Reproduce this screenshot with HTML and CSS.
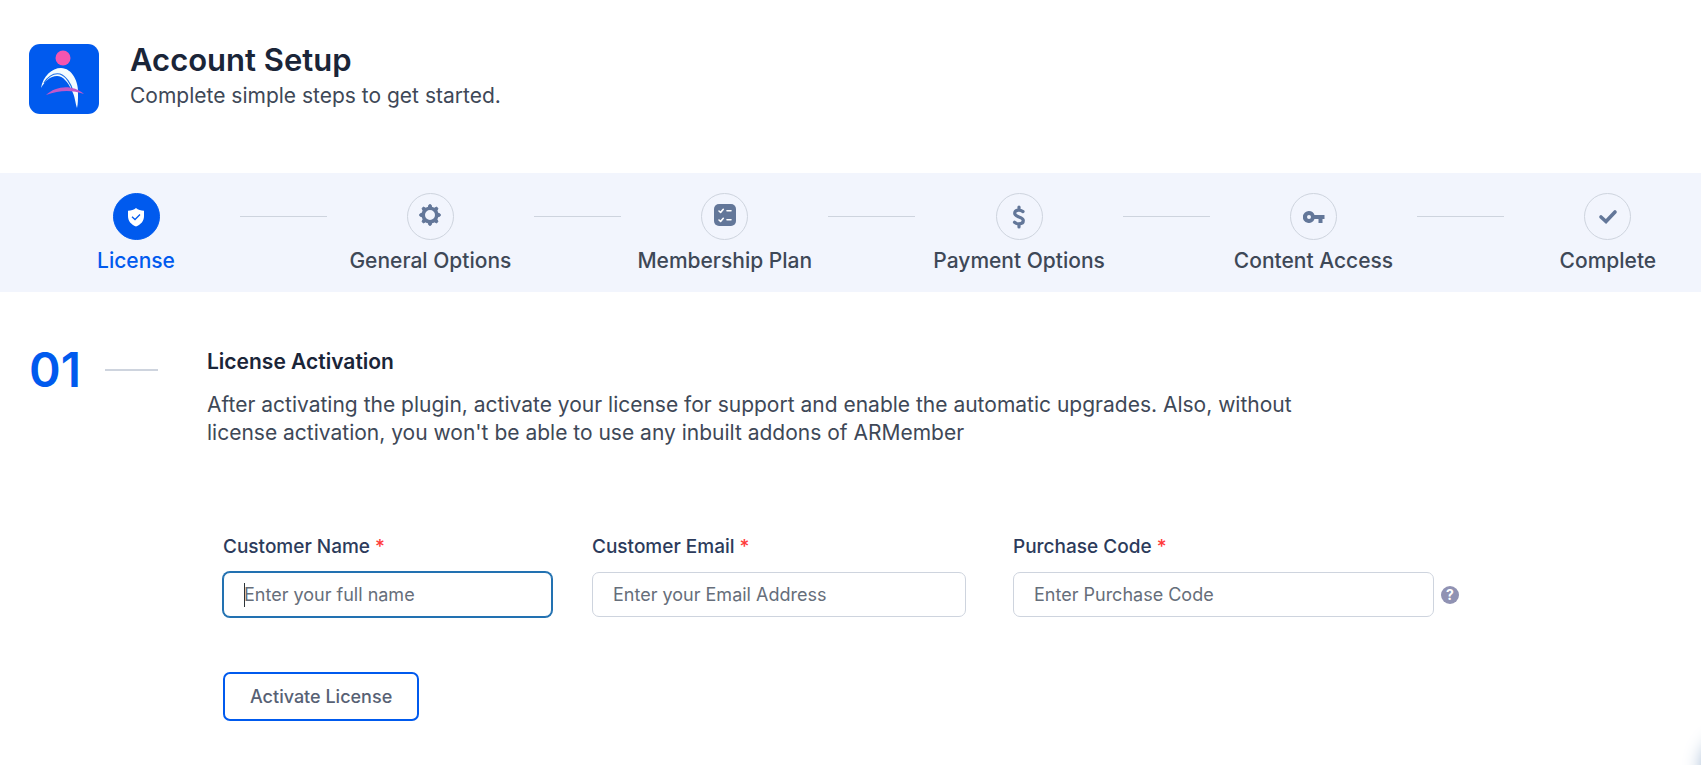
FILE: index.html
```html
<!DOCTYPE html>
<html lang="en">
<head>
    <meta charset="UTF-8">
    <meta name="viewport" content="width=device-width, initial-scale=1.0">
    <title>Account Setup</title>
    <link rel="stylesheet" href="styles.css">
</head>
<body>

<header class="header">
    <svg class="logo" viewBox="0 0 70 70" aria-hidden="true">
        <rect width="70" height="70" rx="11" fill="#005aee"/>
        <circle cx="34" cy="14" r="7.5" fill="#f455b0"/>
        <path d="M12 44C14 32 23 24 32 24C43 24 50 38 49 50C49 55 49 60 48 64C46 58 46 52 43 47C39 38 34 32 28 32C21 32 16 37 12 44Z" fill="#f4fcff"/>
        <path d="M15 39C20 31 26 29 31 30C37 32 42 40 44 47" fill="none" stroke="#1f6fe8" stroke-width="1.200"/>
        <path d="M17 51C27 42 43 40 55 50C43 46 31 46 17 51Z" fill="#c158c8"/>
    </svg>
    <div>
        <h1>Account Setup</h1>
        <p>Complete simple steps to get started.</p>
    </div>
</header>

<ol class="steps">
    <li class="step active">
        <span class="step-icon">
            <svg width="18" height="20" viewBox="0 0 18 20" aria-hidden="true">
                <path d="M9 1C11 2.800 14 3.600 17 3.700V9C17 14 14 17.500 9 19.500C4 17.500 1 14 1 9V3.700C4 3.600 7 2.800 9 1Z" fill="#fff"/>
                <path d="M5 9.700L8 12.500L13 7.500" fill="none" stroke="#005aee" stroke-width="1.300"/>
            </svg>
        </span>
        <span class="step-name">License</span>
    </li>
    <li class="divider" aria-hidden="true"></li>
    <li class="step">
        <span class="step-icon gear">
            <svg width="22" height="22" viewBox="0 0 22 22" aria-hidden="true">
                <g fill="#637799" stroke="#637799" stroke-width="1" stroke-linejoin="round">
                    <path id="tooth" d="M9 4L10 .8H12L13 4V18L12 21.200H10L9 18Z"/>
                    <use href="#tooth" transform="rotate(45 11 11)"/>
                    <use href="#tooth" transform="rotate(90 11 11)"/>
                    <use href="#tooth" transform="rotate(135 11 11)"/>
                </g>
                <circle cx="11" cy="11" r="6.800" fill="#f2f5fd" stroke="#637799" stroke-width="3.600"/>
            </svg>
        </span>
        <span class="step-name">General Options</span>
    </li>
    <li class="divider" aria-hidden="true"></li>
    <li class="step">
        <span class="step-icon list">
            <svg width="22" height="22" viewBox="0 0 22 22" aria-hidden="true">
                <rect width="22" height="22" rx="5" fill="#637799"/>
                <path d="M5 7L6.600 8.400L9.300 5.300M13 6.800H17M5 16L6.600 17.400L9.300 14.300M13 15.800H17" fill="none" stroke="#fff" stroke-width="1.600" stroke-linecap="round" stroke-linejoin="round"/>
            </svg>
        </span>
        <span class="step-name">Membership Plan</span>
    </li>
    <li class="divider" aria-hidden="true"></li>
    <li class="step">
        <span class="step-icon">
            <svg width="14" height="24" viewBox="0 0 14 24" aria-hidden="true">
                <path d="M7 2V5M7 19V22M11 6.600C9.500 5.500 8 5 6.500 5.100C4 5.300 2.700 6.600 2.700 8.300C2.700 12.800 11.300 11 11.300 15.600C11.300 17.700 9.500 18.900 7 18.900C5 18.900 3.600 18.300 2.500 17.300" fill="none" stroke="#637799" stroke-width="3.200" stroke-linecap="round"/>
            </svg>
        </span>
        <span class="step-name">Payment Options</span>
    </li>
    <li class="divider" aria-hidden="true"></li>
    <li class="step">
        <span class="step-icon">
            <svg width="22" height="12" viewBox="0 0 22 12" aria-hidden="true">
                <path fill-rule="evenodd" d="M6 0A6 6 0 1 0 11.500 8H15.500V12H19.500V8H21.500V4H11.500A6 6 0 0 0 6 0ZM6 4A2 2 0 1 1 6 8A2 2 0 0 1 6 4Z" fill="#637799"/>
            </svg>
        </span>
        <span class="step-name">Content Access</span>
    </li>
    <li class="divider" aria-hidden="true"></li>
    <li class="step">
        <span class="step-icon">
            <svg width="20" height="16" viewBox="0 0 20 16" aria-hidden="true">
                <path d="M3 8L8 12.500L17 3" fill="none" stroke="#637799" stroke-width="3.600" stroke-linecap="round"/>
            </svg>
        </span>
        <span class="step-name">Complete</span>
    </li>
</ol>

<main class="content">
    <div class="number">01</div>
    <section class="license">
        <h2>License Activation</h2>
        <p class="description">After activating the plugin, activate your license for support and enable the automatic upgrades. Also, without license activation, you won't be able to use any inbuilt addons of ARMember</p>

        <form class="license-form">
            <div class="fields">
                <div class="form-group">
                    <label for="customer-name">Customer Name <span class="required">*</span></label>
                    <div class="input-row with-caret">
                        <input type="text" id="customer-name" placeholder="Enter your full name" autofocus>
                    </div>
                </div>
                <div class="form-group email-group">
                    <label for="customer-email">Customer Email <span class="required">*</span></label>
                    <input type="email" id="customer-email" placeholder="Enter your Email Address">
                </div>
                <div class="form-group">
                    <label for="purchase-code">Purchase Code <span class="required">*</span></label>
                    <div class="input-row">
                        <input type="text" id="purchase-code" placeholder="Enter Purchase Code">
                        <span class="help">?</span>
                    </div>
                </div>
            </div>
            <button type="button">Activate License</button>
        </form>
    </section>
</main>

<div class="floating-button"></div>

</body>
</html>
```
FILE: styles.css
```css
* {
    box-sizing: border-box;
}
body {
    margin: 0;
    font-family: Inter, "Open Sans", sans-serif;
    font-size: 18px;
    color: #3e4857;
    background-color: #fff;
    overflow-x: hidden;
}
h1, h2, p {
    margin: 0;
}
.header {
    display: flex;
    gap: 31px;
    padding: 44px 29px 57px;
}
.logo {
    width: 70px;
    height: 70px;
}
.header h1 {
    font-size: 31px;
    line-height: 32px;
    font-weight: 600;
    color: #1a2538;
}
.header p {
    font-size: 21px;
    line-height: 40px;
}
.steps {
    display: flex;
    justify-content: space-between;
    margin: 0;
    padding: 20px 3px 16px 46px;
    list-style: none;
    background-color: #f2f5fd;
}
.step {
    flex: 0 0 180px;
    display: flex;
    flex-direction: column;
    align-items: center;
    gap: 6px;
}
.step-icon {
    display: flex;
    justify-content: center;
    align-items: center;
    width: 47px;
    height: 47px;
    border: 1px solid #ced4de;
    border-radius: 50%;
}
.step-icon.gear, .step-icon.list {
    padding-bottom: 3px;
}
.step-name {
    font-size: 21px;
    line-height: 30px;
    font-weight: 500;
    white-space: nowrap;
}
.active .step-icon {
    background-color: #005aee;
    border-color: #005aee;
}
.active .step-name {
    color: #005aee;
}
.divider {
    flex: 0 1 87px;
    height: 1px;
    margin-top: 23px;
    background-color: #ced4de;
}
.content {
    display: flex;
    align-items: flex-start;
    padding: 55px 29px 40px;
}
.number {
    display: flex;
    align-items: center;
    justify-content: space-between;
    flex: 0 0 129px;
    font-size: 48px;
    line-height: 46px;
    font-weight: 600;
    color: #005aee;
}
.number::after {
    content: "";
    width: 53px;
    height: 2px;
    background-color: #ced4de;
}
.license {
    flex: 1;
    margin-left: 49px;
}
.license h2 {
    font-size: 21px;
    line-height: 30px;
    font-weight: 600;
    color: #1a2538;
}
.description {
    max-width: 1140px;
    margin-top: 14px;
    font-size: 21px;
    line-height: 28px;
}
.license-form {
    max-width: 1252px;
    margin-top: 87px;
    padding-left: 16px;
}
.fields {
    display: grid;
    grid-template-columns: 329fr 381fr 446fr;
    gap: 40px;
}
.email-group {
    padding-right: 7px;
}
.form-group label {
    display: block;
    margin-bottom: 12px;
    font-size: 19px;
    line-height: 26px;
    font-weight: 500;
    color: #2c3b5b;
}
.required {
    color: #ff3b3b;
}
.form-group input {
    width: 100%;
    height: 45px;
    padding: 0 20px;
    border: 1px solid #ced4de;
    border-radius: 7px;
    font-family: inherit;
    font-size: 18px;
    color: #3e4857;
    background-color: #fff;
}
.form-group input::placeholder {
    color: #666e7a;
}
.form-group input:focus {
    border-color: #2271b1;
    box-shadow: 0 0 0 1px #2271b1;
    outline: none;
    caret-color: transparent;
}
.input-row {
    position: relative;
    display: flex;
    align-items: center;
    gap: 7px;
}
.with-caret:focus-within::after {
    content: "";
    position: absolute;
    left: 21px;
    width: 1px;
    height: 24px;
    background-color: #2c3338;
}
.help {
    flex: none;
    width: 18px;
    height: 18px;
    border-radius: 50%;
    font-size: 14px;
    line-height: 18px;
    font-weight: 700;
    text-align: center;
    color: #fff;
    background-color: #9092b3;
}
.license-form button {
    margin-top: 55px;
    padding: 0 25px;
    height: 49px;
    border: 2px solid #005aee;
    border-radius: 7px;
    font-family: inherit;
    font-size: 18px;
    font-weight: 500;
    color: #576174;
    background-color: #fff;
    cursor: pointer;
}
/* round button that sits just off the corner, only its shadow shows */
.floating-button {
    position: fixed;
    right: -62px;
    bottom: -32px;
    width: 60px;
    height: 60px;
    border-radius: 50%;
    background-color: #fff;
    box-shadow: 0 0 20px #8aa6c8;
}
```
